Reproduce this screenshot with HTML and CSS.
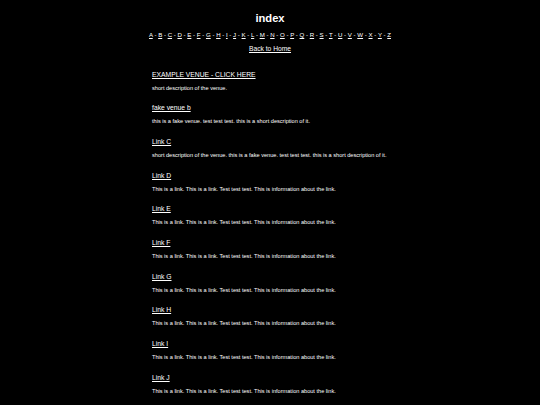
FILE: index.html
```html
<!DOCTYPE html>
<html lang="en">
<head>
<meta charset="utf-8">
<title>index</title>
<link rel="stylesheet" href="styles.css">
</head>
<body>
<header class="header">
  <h1 class="title">index</h1>
  <nav class="alpha">
    <a href="#">A</a> - <a href="#">B</a> - <a href="#">C</a> - <a href="#">D</a> - <a href="#">E</a> - <a href="#">F</a> - <a href="#">G</a> - <a href="#">H</a> - <a href="#">I</a> - <a href="#">J</a> - <a href="#">K</a> - <a href="#">L</a> - <a href="#">M</a> - <a href="#">N</a> - <a href="#">O</a> - <a href="#">P</a> - <a href="#">Q</a> - <a href="#">R</a> - <a href="#">S</a> - <a href="#">T</a> - <a href="#">U</a> - <a href="#">V</a> - <a href="#">W</a> - <a href="#">X</a> - <a href="#">Y</a> - <a href="#">Z</a>
  </nav>
  <a class="home" href="#">Back to Home</a>
</header>
<main class="list">
  <div class="item"><a class="link" href="#">EXAMPLE VENUE - CLICK HERE</a><p class="desc">short description of the venue.</p></div>
  <div class="item"><a class="link" href="#">fake venue b</a><p class="desc">this is a fake venue. test test test. this is a short description of it.</p></div>
  <div class="item"><a class="link" href="#">Link C</a><p class="desc">short description of the venue. this is a fake venue. test test test. this is a short description of it.</p></div>
  <div class="item"><a class="link" href="#">Link D</a><p class="desc">This is a link. This is a link. Test test test. This is information about the link.</p></div>
  <div class="item"><a class="link" href="#">Link E</a><p class="desc">This is a link. This is a link. Test test test. This is information about the link.</p></div>
  <div class="item"><a class="link" href="#">Link F</a><p class="desc">This is a link. This is a link. Test test test. This is information about the link.</p></div>
  <div class="item"><a class="link" href="#">Link G</a><p class="desc">This is a link. This is a link. Test test test. This is information about the link.</p></div>
  <div class="item"><a class="link" href="#">Link H</a><p class="desc">This is a link. This is a link. Test test test. This is information about the link.</p></div>
  <div class="item"><a class="link" href="#">Link I</a><p class="desc">This is a link. This is a link. Test test test. This is information about the link.</p></div>
  <div class="item"><a class="link" href="#">Link J</a><p class="desc">This is a link. This is a link. Test test test. This is information about the link.</p></div>
</main>
</body>
</html>
```

FILE: styles.css
```css
html, body {
  margin: 0;
  padding: 0;
  background: #000;
  color: #fff;
  font-family: "Liberation Sans", Arial, sans-serif;
}

a {
  color: #fff;
  text-decoration: underline;
}

.header {
  display: flex;
  flex-direction: column;
  align-items: center;
  padding-top: 11.5px;
}

.title {
  margin: 0;
  font-size: 11.2px;
  line-height: 13px;
  font-weight: bold;
}

.alpha {
  margin-top: 6.5px;
  font-size: 6.1px;
  line-height: 8px;
  white-space: nowrap;
}

.home {
  margin-top: 6px;
  font-size: 6.7px;
  line-height: 8px;
}

.list {
  width: 236px;
  margin: 17.5px auto 0;
  display: flex;
  flex-direction: column;
  gap: 12.7px;
  padding-bottom: 8px;
}

.item {
  display: flex;
  flex-direction: column;
  align-items: flex-start;
}

.link {
  font-size: 6.75px;
  line-height: 8px;
}

.desc {
  margin: 5px 0 0;
  font-size: 5.6px;
  line-height: 8px;
  white-space: nowrap;
}
```
